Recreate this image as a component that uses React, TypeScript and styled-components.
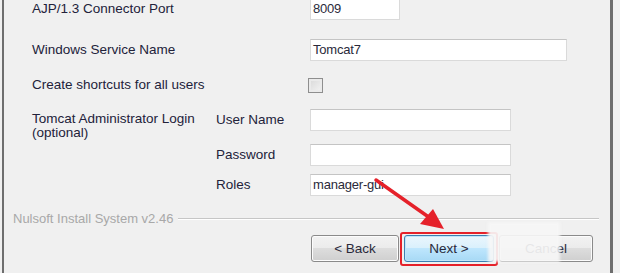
import styled, { createGlobalStyle } from "styled-components";

const Global = createGlobalStyle`
  html, body {
    margin: 0;
    padding: 0;
    background: #f0f0f0;
    overflow: hidden;
  }
  body {
    font-family: "Liberation Sans", Arial, sans-serif;
  }
`;

const Frame = styled.div`
  position: relative;
  width: 620px;
  height: 273px;
  overflow: hidden;
  background: #f0f0f0;
`;

const Window = styled.div`
  margin-left: 2px;
  width: 611px;
  height: 273px;
  border-left: 2px solid #6e6e6e;
  border-right: 3px solid #6e6e6e;
  box-sizing: border-box;
  display: flex;
  flex-direction: column;
`;

const Form = styled.div`
  margin-top: -3px;
  padding-left: 28px;
  display: flex;
  flex-direction: column;
`;

const Row = styled.div<{ $top: number }>`
  display: grid;
  grid-template-columns: 184px 94px 1fr;
  grid-template-rows: 24px;
  height: 24px;
  margin-top: ${(p) => p.$top}px;
  align-items: center;
`;

const Label = styled.div<{ $start?: boolean }>`
  font-size: 13.5px;
  color: #22223a;
  line-height: 14px;
  white-space: nowrap;
  align-self: ${(p) => (p.$start ? "start" : "center")};
  padding-top: ${(p) => (p.$start ? "4px" : "0")};
`;

const Input = styled.div<{ $w: number }>`
  width: ${(p) => p.$w}px;
  height: 22px;
  box-sizing: border-box;
  background: #ffffff;
  border: 1px solid #dadada;
  border-top-color: #c4c4c4;
  font-size: 13px;
  color: #2a2a3a;
  letter-spacing: -0.2px;
  line-height: 20px;
  padding-left: 2px;
`;

const Check = styled.div`
  width: 15px;
  height: 15px;
  box-sizing: border-box;
  border: 1px solid #8e8e8e;
  background: linear-gradient(135deg, #d8d8d8, #f4f4f4);
  box-shadow: inset 0 0 0 2px #eaeaea;
  margin-left: -2px;
`;

const Separator = styled.div`
  margin-top: 14px;
  padding-left: 9px;
  display: flex;
  align-items: center;
  gap: 5px;
  padding-right: 11px;
`;

const SepText = styled.span`
  font-size: 13px;
  color: #a8a8a8;
  white-space: nowrap;
`;

const SepLine = styled.div`
  flex: 1;
  height: 0;
  border-top: 1px solid #c6c6c6;
  border-bottom: 1px solid #ffffff;
`;

const Buttons = styled.div`
  margin-top: 9px;
  padding-left: 307px;
  display: flex;
  gap: 5px;
`;

const Button = styled.div<{ $primary?: boolean; $w: number }>`
  position: relative;
  width: ${(p) => p.$w}px;
  height: 27px;
  box-sizing: border-box;
  border: 1px solid ${(p) => (p.$primary ? "#3c7fb1" : "#8a8a8a")};
  border-radius: 3px;
  background: ${(p) =>
    p.$primary
      ? "linear-gradient(#eaf6fd, #d9f0fc 50%, #bee6fd 50%, #a7d9f5)"
      : "linear-gradient(#f2f2f2, #ebebeb 50%, #dddddd 50%, #cfcfcf)"};
  box-shadow: inset 0 0 0 1px ${(p) => (p.$primary ? "#bfe6fb" : "#fcfcfc")};
  display: flex;
  align-items: center;
  justify-content: center;
  font-size: 13.5px;
  color: #2a2a3a;
`;

const Highlight = styled.div`
  position: absolute;
  left: -5px;
  top: -4px;
  right: -5px;
  bottom: -5px;
  border: 2px solid #e5212a;
  border-radius: 3px;
`;

const Mosaic = styled.div`
  position: absolute;
  left: -12px;
  top: -14px;
  width: 72px;
  height: 40px;
  background: rgba(246, 246, 246, 0.92);
  filter: blur(1.5px);
`;

const Arrow = styled.svg`
  position: absolute;
  left: 0;
  top: 0;
  pointer-events: none;
`;

export default function App() {
  return (
    <>
      <Global />
      <Frame>
        <Window>
          <Form>
            <Row $top={0}>
              <Label>AJP/1.3 Connector Port</Label>
              <span />
              <Input $w={90}>8009</Input>
            </Row>
            <Row $top={17}>
              <Label>Windows Service Name</Label>
              <span />
              <Input $w={257}>Tomcat7</Input>
            </Row>
            <Row $top={11}>
              <Label>Create shortcuts for all users</Label>
              <span />
              <Check />
            </Row>
            <Row $top={11}>
              <Label $start>
                Tomcat Administrator Login
                <br />
                (optional)
              </Label>
              <Label>User Name</Label>
              <Input $w={201}></Input>
            </Row>
            <Row $top={11}>
              <span />
              <Label>Password</Label>
              <Input $w={201}></Input>
            </Row>
            <Row $top={6}>
              <span />
              <Label>Roles</Label>
              <Input $w={201}>manager-gui</Input>
            </Row>
          </Form>
          <Separator>
            <SepText>Nulsoft Install System v2.46</SepText>
            <SepLine />
          </Separator>
          <Buttons>
            <Button $w={88}>&lt; Back</Button>
            <Button $w={90} $primary>
              Next &gt;
              <Highlight />
            </Button>
            <Button $w={94}>
              Cancel
              <Mosaic />
            </Button>
          </Buttons>
        </Window>
        <Arrow width="620" height="273" viewBox="0 0 620 273">
          <line x1="376" y1="180" x2="430" y2="218" stroke="#e5212a" strokeWidth="3.5" strokeLinecap="round" />
          <polygon points="444,229 420,224 433,209" fill="#e5212a" />
        </Arrow>
      </Frame>
    </>
  );
}
